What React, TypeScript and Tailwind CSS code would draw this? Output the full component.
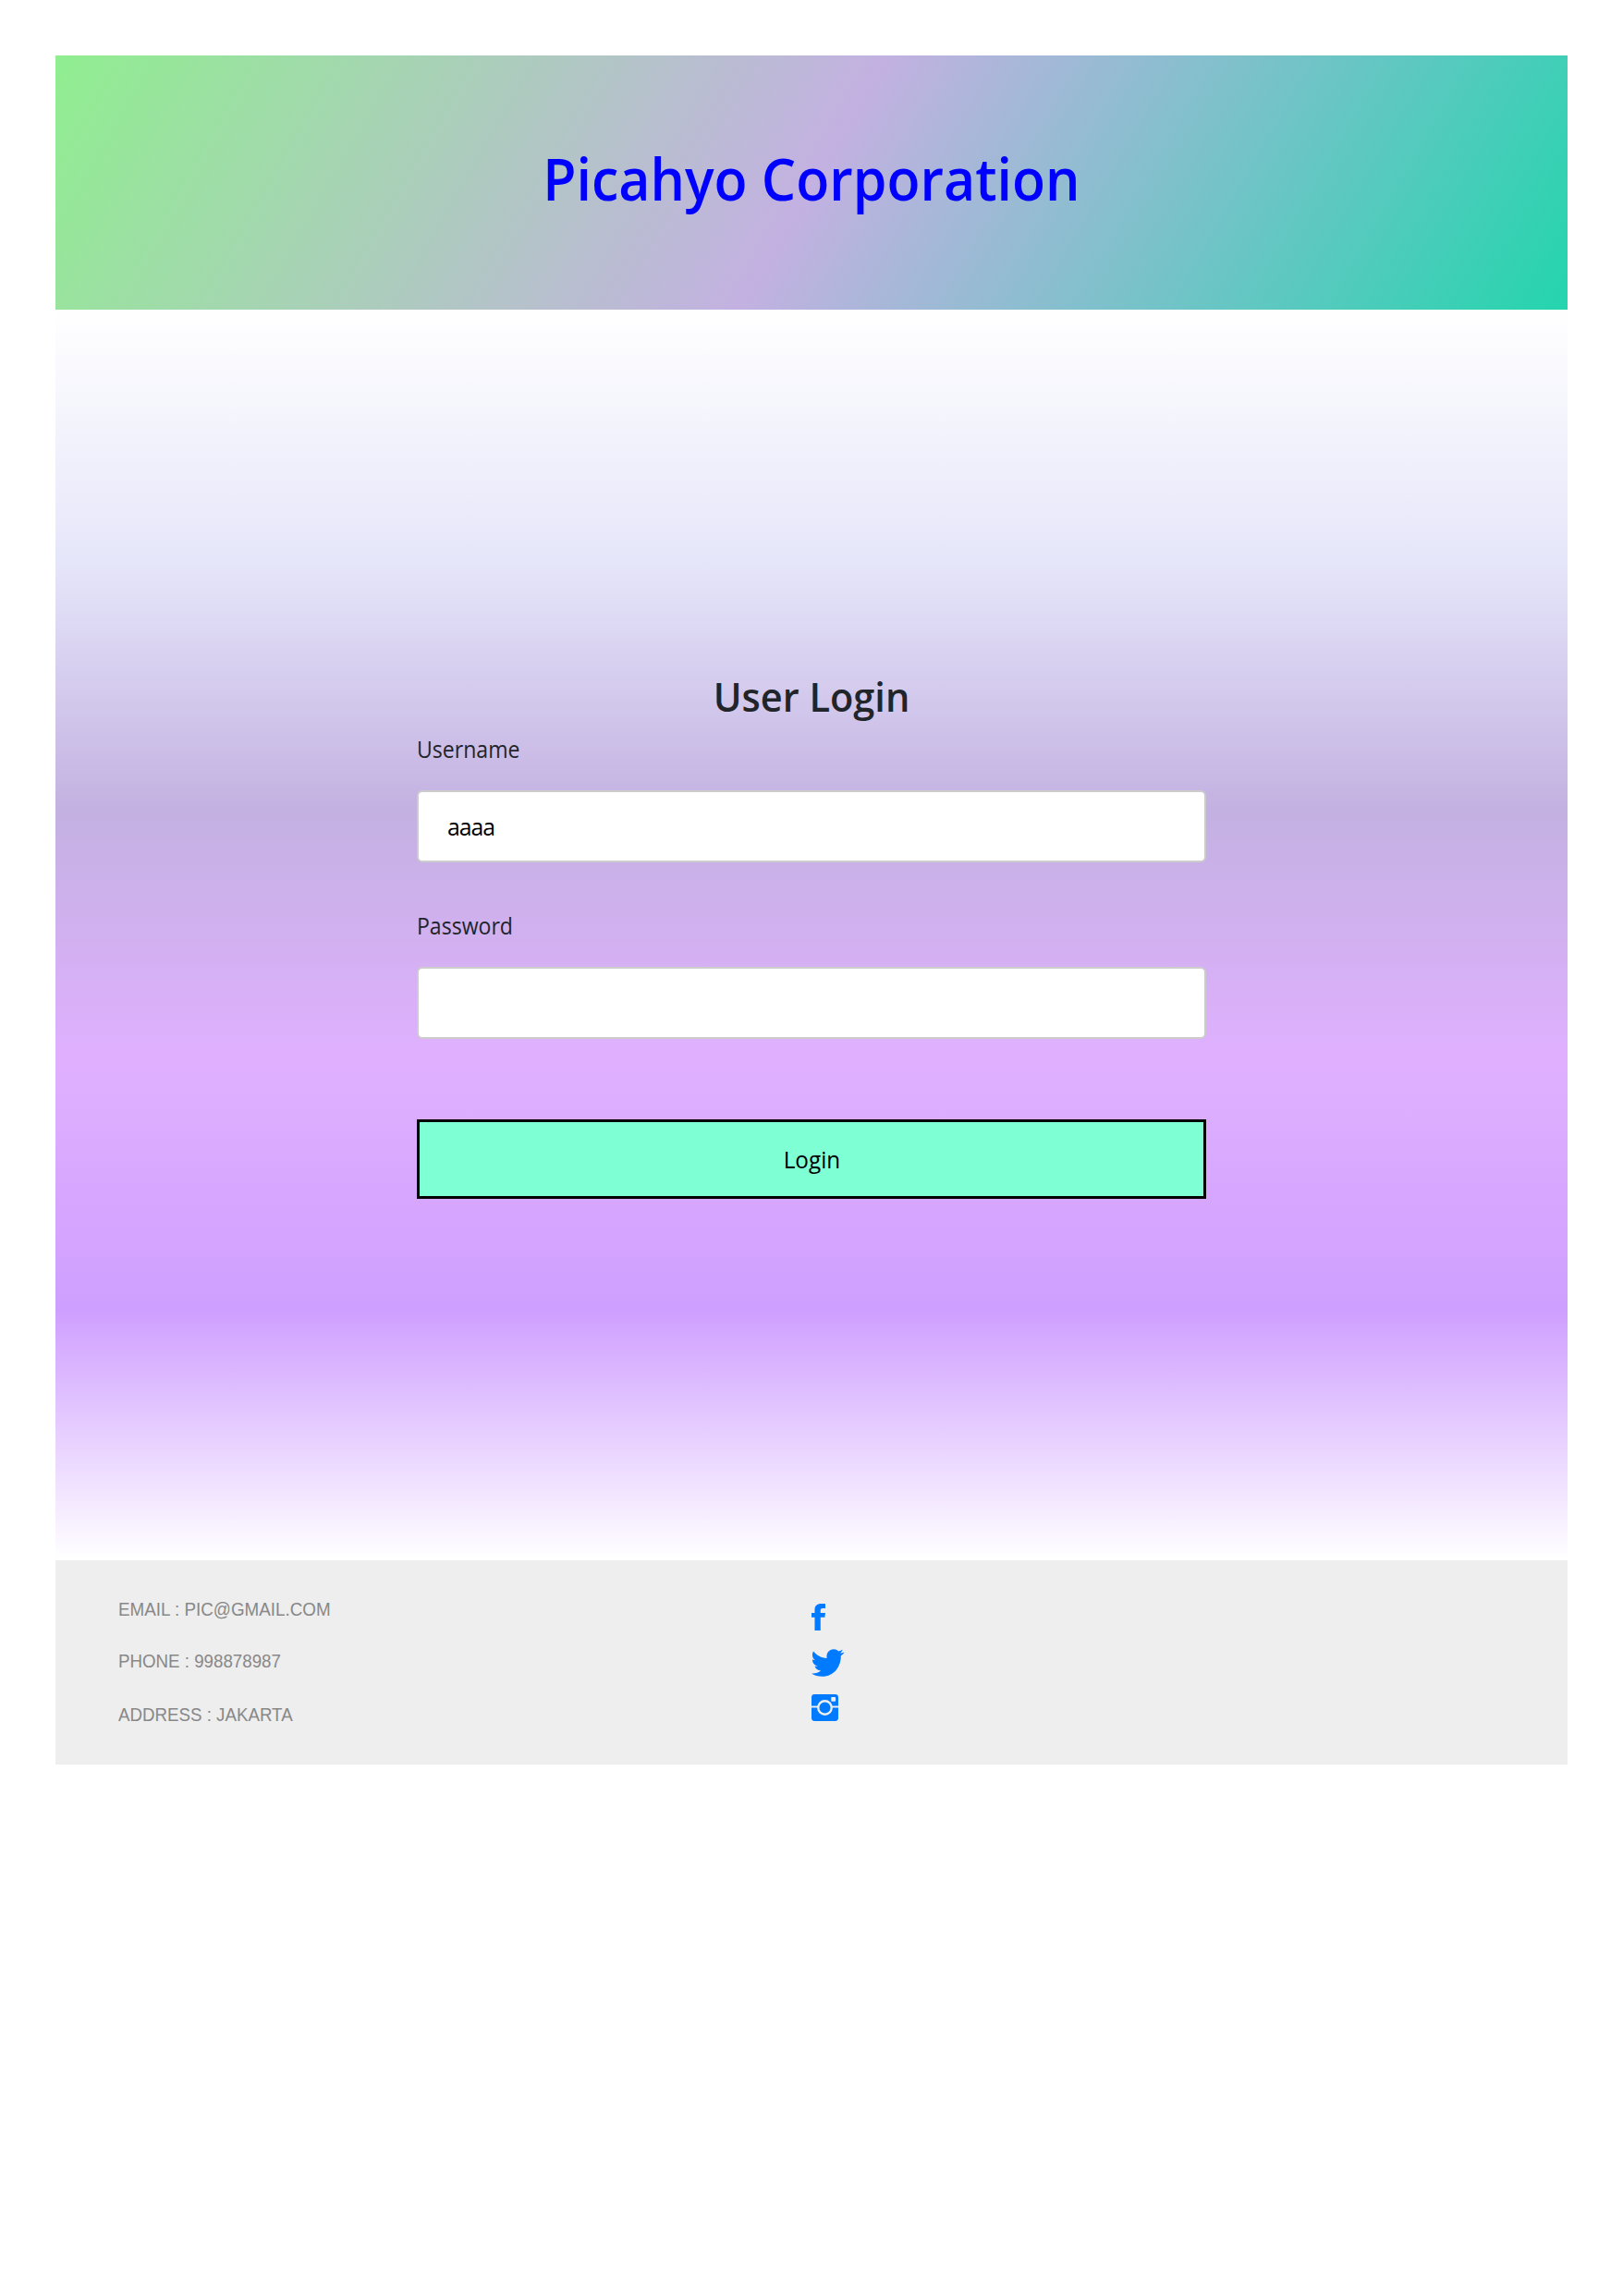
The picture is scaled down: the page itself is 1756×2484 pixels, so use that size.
import React from "react";

const ui = "font-['Open_Sans','Noto_Sans',sans-serif]";

function Header() {
  return (
    <header className="flex h-[275px] items-start justify-center bg-[linear-gradient(120deg,#90ee90_0%,#c3b1e1_50%,#24d5ae_100%)] pt-[95px]">
      <h1 className={`${ui} scale-x-[0.944] whitespace-nowrap text-[62.5px] leading-[75px] font-semibold text-[#0000ff]`}>
        Picahyo Corporation
      </h1>
    </header>
  );
}

function LoginForm() {
  return (
    <main className="h-[1353px] bg-[linear-gradient(180deg,#ffffff_0%,#e6e6fa_20%,#c3b1e1_40%,#e0b0ff_60%,#cf9fff_80%,#ffffff_100%)] pt-[390px]">
      <form className={`${ui} mx-auto flex w-[854px] flex-col text-[24.8px] leading-[38px] text-[#212529]`}>
        <h2 className="scale-x-[0.955] text-center text-[43.5px] leading-[58px] font-semibold">User Login</h2>
        <label className="mt-[8px] origin-left scale-x-[0.93]">Username</label>
        <input
          type="text"
          defaultValue="aaaa"
          className="mt-[26px] h-[78px] rounded-[6px] border-2 border-[#cccccc] bg-white px-[31px] tracking-[-1px] text-black"
        />
        <label className="mt-[49px] origin-left scale-x-[0.93]">Password</label>
        <input
          type="password"
          className="mt-[26px] h-[78px] rounded-[6px] border-2 border-[#cccccc] bg-white px-[31px] text-black"
        />
        <button
          type="button"
          className="mt-[87px] h-[86px] border-[3px] border-black bg-[#7fffd4] pb-px text-black"
        >
          <span className="inline-block scale-x-[0.98]">Login</span>
        </button>
      </form>
    </main>
  );
}

function Footer() {
  return (
    <footer className="flex h-[221px] bg-[#eeeeee] pl-[68px]">
      <div className="flex w-[750px] flex-col pt-[42px] font-['Liberation_Sans',Arial,sans-serif] text-[19.5px] leading-[23px] text-[#888888]">
        <p className="origin-left scale-x-[0.965]">EMAIL : PIC@GMAIL.COM</p>
        <p className="mt-[33px] origin-left scale-x-[0.96]">PHONE : 998878987</p>
        <p className="mt-[35px] origin-left scale-x-[0.96]">ADDRESS : JAKARTA</p>
      </div>
      <div className="flex flex-col pt-[47px] text-[#007bff]">
        <svg width="15" height="29" viewBox="0 0 16 30" preserveAspectRatio="none" fill="currentColor">
          <path d="M16 .2v5h-3c-1.700 0-2.600.8-2.600 2v3.200H16l-.7 4.900h-4.900V30H3.700V15.300H0v-4.900h3.700V6.600C3.700 2.300 6.600 0 11 0 13 0 15.300.1 16 .2z" />
        </svg>
        <svg className="mt-[20px]" width="36" height="30" viewBox="0 0 36 30" fill="currentColor">
          <path d="M35.500 3.500c-1 1.700-2.200 2.800-3.700 3.900C32 18 25 29.700 11.500 29.700 7.300 29.700 3.300 28.700 0 26.500c4 .3 7.500-.7 10.200-2.900-3.300-.1-5.800-2.200-6.700-5 1.100.2 2 .2 3.100-.1C3.200 17.800.9 15 .9 11.300c1 .6 2 .9 3.200.9C.9 10 0 5.800 2 2.400c3.700 4.400 8.600 7.200 14.600 7.500C15.500 4.500 19.200.2 24 .2c2.100 0 3.900.8 5.200 2.300 1.600-.4 3.100-.9 4.500-1.800-.5 1.600-1.600 3-3.100 3.900 1.700-.1 3.300-.5 4.900-1.100z" />
        </svg>
        <svg className="mt-[19px]" width="29" height="29" viewBox="0 0 30 30">
          <rect width="30" height="30" rx="3.500" fill="currentColor" />
          <path d="M0 14h30" stroke="#eeeeee" strokeWidth="2" />
          <circle cx="15" cy="15" r="7.500" fill="currentColor" stroke="#eeeeee" strokeWidth="2.400" />
          <rect x="22" y="3" width="5" height="5" rx="1" fill="#eeeeee" />
        </svg>
      </div>
    </footer>
  );
}

export default function App() {
  return (
    <div className="min-h-[2484px] bg-white pt-[60px]">
      <div className="mx-auto w-[1636px]">
        <Header />
        <LoginForm />
        <Footer />
      </div>
    </div>
  );
}
